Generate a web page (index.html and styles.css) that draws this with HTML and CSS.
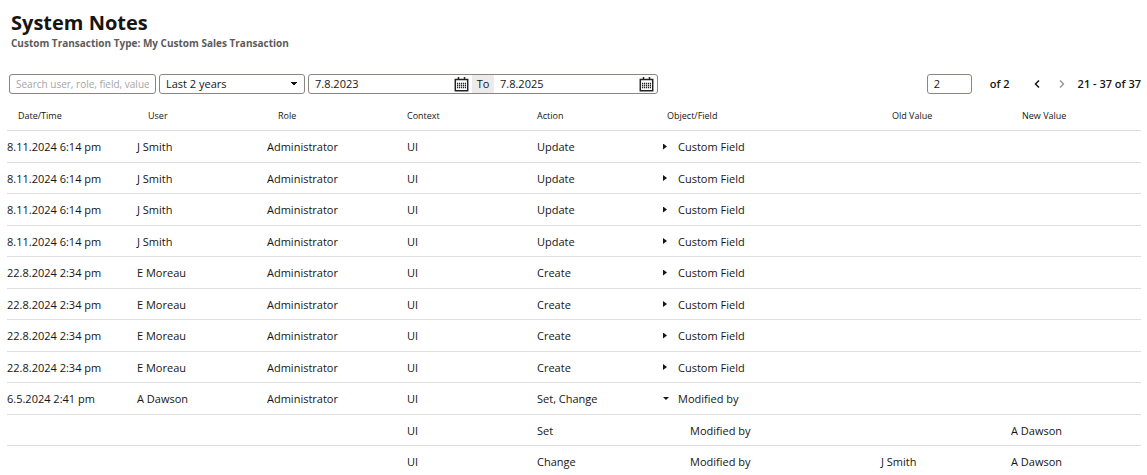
FILE: index.html
```
<!DOCTYPE html>
<html lang="en">
<head>
    <meta charset="UTF-8">
    <meta name="viewport" content="width=device-width, initial-scale=1.0">
    <title>System Notes</title>
    <link rel="stylesheet" href="styles.css">
</head>
<body>
    <header class="page-header">
        <h1>System Notes</h1>
        <h2>Custom Transaction Type: My Custom Sales Transaction</h2>
    </header>

    <form class="toolbar">
        <input type="text" class="field search" placeholder="Search user, role, field, value" aria-label="Search">
        <select class="field period" aria-label="Period">
            <option>Last 2 years</option>
        </select>
        <div class="date-range">
            <input type="text" class="date" value="7.8.2023" aria-label="Date from">
            <button type="button" class="icon-button" aria-label="Choose start date">
                <svg width="15" height="15" viewBox="0 0 15 15">
                    <path d="M1.300 2.500h12.400v11.200H1.300zM4.500 0v3M10.500 0v3" fill="none" stroke="#222" stroke-width="1.500"/>
                    <path d="M3 6.500h9M3 8.500h9M3 10.500h9" stroke="#222" stroke-width="1.400" stroke-dasharray="1.200 0.750"/>
                </svg>
            </button>
            <span class="to">To</span>
            <input type="text" class="date" value="7.8.2025" aria-label="Date to">
            <button type="button" class="icon-button" aria-label="Choose end date">
                <svg width="15" height="15" viewBox="0 0 15 15">
                    <path d="M1.300 2.500h12.400v11.200H1.300zM4.500 0v3M10.500 0v3" fill="none" stroke="#222" stroke-width="1.500"/>
                    <path d="M3 6.500h9M3 8.500h9M3 10.500h9" stroke="#222" stroke-width="1.400" stroke-dasharray="1.200 0.750"/>
                </svg>
            </button>
        </div>
        <div class="pager">
            <input type="text" class="field page" value="2" aria-label="Page">
            <span class="pages">of 2</span>
            <button type="button" class="icon-button" aria-label="Previous page">
                <svg width="6" height="8" viewBox="0 0 6 8"><path d="M5 0.500L1.500 4L5 7.500" fill="none" stroke="#161513" stroke-width="1.500"/></svg>
            </button>
            <button type="button" class="icon-button next" aria-label="Next page" disabled>
                <svg width="6" height="8" viewBox="0 0 6 8"><path d="M1 0.500L4.500 4L1 7.500" fill="none" stroke="#8f8f8f" stroke-width="1.300"/></svg>
            </button>
            <span class="count">21 - 37 of 37</span>
        </div>
    </form>

    <table class="notes">
        <colgroup>
            <col class="col">
            <col class="col">
            <col class="col-role">
            <col class="col">
            <col class="col">
            <col class="col-field">
            <col class="col">
            <col>
        </colgroup>
        <thead>
            <tr>
                <th class="indent">Date/Time</th>
                <th class="indent">User</th>
                <th class="indent">Role</th>
                <th>Context</th>
                <th>Action</th>
                <th>Object/Field</th>
                <th class="indent">Old Value</th>
                <th class="indent">New Value</th>
            </tr>
        </thead>
        <tbody>
            <tr><td>8.11.2024 6:14 pm</td><td>J Smith</td><td>Administrator</td><td>UI</td><td>Update</td><td><button type="button" class="toggle">Custom Field</button></td><td></td><td></td></tr>
            <tr><td>8.11.2024 6:14 pm</td><td>J Smith</td><td>Administrator</td><td>UI</td><td>Update</td><td><button type="button" class="toggle">Custom Field</button></td><td></td><td></td></tr>
            <tr><td>8.11.2024 6:14 pm</td><td>J Smith</td><td>Administrator</td><td>UI</td><td>Update</td><td><button type="button" class="toggle">Custom Field</button></td><td></td><td></td></tr>
            <tr><td>8.11.2024 6:14 pm</td><td>J Smith</td><td>Administrator</td><td>UI</td><td>Update</td><td><button type="button" class="toggle">Custom Field</button></td><td></td><td></td></tr>
            <tr><td>22.8.2024 2:34 pm</td><td>E Moreau</td><td>Administrator</td><td>UI</td><td>Create</td><td><button type="button" class="toggle">Custom Field</button></td><td></td><td></td></tr>
            <tr><td>22.8.2024 2:34 pm</td><td>E Moreau</td><td>Administrator</td><td>UI</td><td>Create</td><td><button type="button" class="toggle">Custom Field</button></td><td></td><td></td></tr>
            <tr><td>22.8.2024 2:34 pm</td><td>E Moreau</td><td>Administrator</td><td>UI</td><td>Create</td><td><button type="button" class="toggle">Custom Field</button></td><td></td><td></td></tr>
            <tr><td>22.8.2024 2:34 pm</td><td>E Moreau</td><td>Administrator</td><td>UI</td><td>Create</td><td><button type="button" class="toggle">Custom Field</button></td><td></td><td></td></tr>
            <tr><td>6.5.2024 2:41 pm</td><td>A Dawson</td><td>Administrator</td><td>UI</td><td>Set, Change</td><td><button type="button" class="toggle open">Modified by</button></td><td></td><td></td></tr>
            <tr><td></td><td></td><td></td><td>UI</td><td>Set</td><td class="child">Modified by</td><td></td><td>A Dawson</td></tr>
            <tr><td></td><td></td><td></td><td>UI</td><td>Change</td><td class="child">Modified by</td><td>J Smith</td><td>A Dawson</td></tr>
        </tbody>
    </table>
</body>
</html>
```

FILE: styles.css
```
* {
    box-sizing: border-box;
}

body {
    margin: 0;
    padding: 11px 6px 0 7px;
    height: 100vh;
    overflow: hidden;
    background-color: #fff;
    color: #161513;
    font-family: "Open Sans", "Noto Sans", sans-serif;
    font-size: 11px;
}

input, select, button {
    font: inherit;
    color: inherit;
}

.page-header {
    padding-left: 4px;
}

h1 {
    margin: 0;
    font-size: 20px;
    line-height: 24px;
}

h2 {
    margin: 0;
    color: #5b5b5b;
    font-size: 10px;
    line-height: 16px;
}

.toolbar {
    display: flex;
    align-items: center;
    gap: 3px;
    margin: 23px 0 0;
    padding-left: 2px;
}

.field, .date-range {
    height: 20px;
    border: 1px solid #8b8580;
    border-radius: 3px;
    background-color: #fff;
}

.field {
    padding: 0 6px 1px;
}

.search {
    width: 147px;
    font-size: 10px;
}

.search::placeholder {
    color: #a5a5a5;
}

.period {
    width: 146px;
    appearance: none;
    background: linear-gradient(to bottom right, #161513 50%, transparent 50%) no-repeat right 6px center / 4px 4px,
        linear-gradient(to bottom left, #161513 50%, transparent 50%) no-repeat right 10px center / 4px 4px,
        #fff;
}

.date-range {
    display: flex;
    align-items: center;
    width: 350px;
}

.date {
    flex: 1;
    min-width: 0;
    height: 18px;
    padding: 0 6px 1px;
    border: none;
    background: none;
}

.to {
    width: 22px;
    background-color: #ebebeb;
    line-height: 18px;
    text-align: center;
}

.icon-button {
    display: flex;
    padding: 0 3px;
    border: none;
    background: none;
}

.pager {
    display: flex;
    align-items: center;
    margin-left: auto;
    font-weight: 600;
    line-height: 14px;
}

.page {
    width: 45px;
    font-weight: 400;
}

.pages {
    margin: 0 21px 0 18px;
}

.next {
    margin: 0 10px 0 13px;
}

.count {
    white-space: nowrap;
}

.notes {
    width: 100%;
    table-layout: fixed;
    border-collapse: separate;
    border-spacing: 0;
}

.col {
    width: 130px;
}

.col-role {
    width: 140px;
}

.col-field {
    width: 214px;
}

th, td {
    padding: 0;
    border-bottom: 1px solid #dfdfdf;
    text-align: left;
    white-space: nowrap;
}

th {
    height: 37px;
    padding-top: 7px;
    font-size: 9px;
    font-weight: 400;
}

.indent {
    padding-left: 11px;
}

td {
    height: 32px;
}

tr:nth-child(even) td {
    height: 31px;
}

.toggle {
    display: flex;
    align-items: center;
    margin-left: -4px;
    padding: 0;
    border: none;
    background: none;
}

.toggle::before {
    content: "";
    width: 4px;
    height: 6px;
    margin-right: 11px;
    background-color: #161513;
    clip-path: polygon(0 0, 100% 50%, 0 100%);
}

.toggle.open::before {
    width: 6px;
    height: 3px;
    margin-right: 9px;
    clip-path: polygon(0 0, 100% 0, 50% 100%);
}

.child {
    padding-left: 23px;
}
```
